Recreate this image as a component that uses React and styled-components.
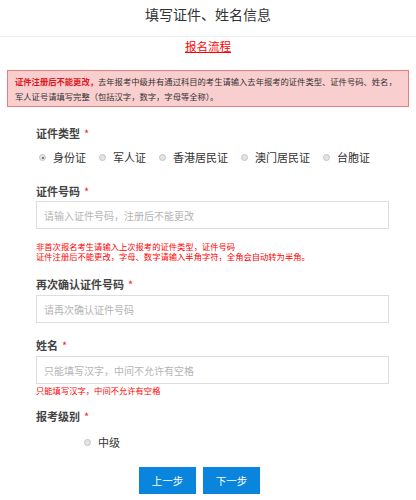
import styled, { createGlobalStyle } from "styled-components";

const GlobalStyle = createGlobalStyle`
  html, body {
    margin: 0;
    padding: 0;
    background: #fff;
  }
  body {
    font-family: "Noto Sans CJK SC", "Liberation Sans", sans-serif;
    color: #333;
  }
`;

const Page = styled.div`
  width: 416px;
`;

const Header = styled.div`
  height: 37px;
  box-sizing: border-box;
  padding-bottom: 9px;
  border-bottom: 1px solid #eee;
  text-align: center;
  font-size: 14px;
  line-height: 28px;
  color: #333;
`;

const FlowLink = styled.a`
  display: block;
  width: fit-content;
  margin: 0 auto;
  font-size: 11.5px;
  line-height: 18px;
  color: #f00;
  text-decoration: underline;
`;

const Alert = styled.div`
  margin: 15px 7px 0;
  padding: 3px 5px 2px 7px;
  border: 1px solid #e58080;
  background: #f9cece;
  font-size: 8.3px;
  line-height: 15px;
  color: #333;
  white-space: nowrap;
`;

const AlertStrong = styled.span`
  color: #e4161c;
  font-weight: bold;
`;

const Form = styled.div`
  margin: 0 27px 0 36px;
`;

const Label = styled.div`
  margin-top: ${(p) => p.$top}px;
  margin-bottom: ${(p) => p.$bottom || 2}px;
  font-size: 11px;
  font-weight: bold;
  line-height: 16px;
  color: #444;
`;

const Star = styled.span`
  margin-left: 4px;
  color: #f22;
  font-weight: normal;
`;

const RadioRow = styled.div`
  display: flex;
  gap: 13px;
  height: 17px;
  align-items: center;
  padding-left: ${(p) => p.$indent || 3}px;
`;

const RadioItem = styled.label`
  display: flex;
  align-items: center;
  gap: 7px;
  font-size: 11px;
  line-height: 17px;
  color: #333;
  white-space: nowrap;
`;

const Dot = styled.span`
  position: relative;
  width: 7px;
  height: 7px;
  box-sizing: border-box;
  border-radius: 50%;
  border: 1px solid #c4c4c4;
  background: #e4e4e4;

  &::after {
    content: "";
    display: ${(p) => (p.$checked ? "block" : "none")};
    position: absolute;
    left: 1.5px;
    top: 1.5px;
    width: 2px;
    height: 2px;
    border-radius: 50%;
    background: #555;
  }
`;

const Input = styled.input`
  display: block;
  width: 100%;
  height: 28px;
  box-sizing: border-box;
  margin: 0;
  padding: 0 7px;
  border: 1px solid #ddd;
  border-radius: 0;
  outline: none;
  font-family: inherit;
  font-size: 10px;
  color: #333;

  &::placeholder {
    color: #b5b5b5;
  }
`;

const HintBlock = styled.div`
  margin-top: ${(p) => p.$top || 0}px;
  font-size: 8.3px;
  line-height: 10px;
  color: #f00;
  white-space: nowrap;
`;

const ButtonRow = styled.div`
  display: flex;
  gap: 7px;
  margin-top: 16px;
  padding-left: 103px;
`;

const Button = styled.button`
  width: 57px;
  height: 27px;
  border: none;
  border-radius: 0;
  background: #0a85de;
  color: #fff;
  font-family: inherit;
  font-size: 10.5px;
  cursor: pointer;
`;

const idTypes = ["身份证", "军人证", "香港居民证", "澳门居民证", "台胞证"];

export default function App() {
  return (
    <Page>
      <GlobalStyle />
      <Header>填写证件、姓名信息</Header>
      <FlowLink href="#">报名流程</FlowLink>

      <Alert>
        <AlertStrong>证件注册后不能更改，</AlertStrong>
        去年报考中级并有通过科目的考生请输入去年报考的证件类型、证件号码、姓名，
        <br />
        军人证号请填写完整（包括汉字，数字，字母等全称）。
      </Alert>

      <Form>
        <Label $top={18} $bottom={8}>
          证件类型<Star>*</Star>
        </Label>
        <RadioRow>
          {idTypes.map((t, i) => (
            <RadioItem key={t}>
              <Dot $checked={i === 0} />
              {t}
            </RadioItem>
          ))}
        </RadioRow>

        <Label $top={17}>
          证件号码<Star>*</Star>
        </Label>
        <Input placeholder="请输入证件号码，注册后不能更改" />
        <HintBlock $top={12}>
          非首次报名考生请输入上次报考的证件类型，证件号码
          <br />
          证件注册后不能更改，字母、数字请输入半角字符，全角会自动转为半角。
        </HintBlock>

        <Label $top={15} $bottom={3}>
          再次确认证件号码<Star>*</Star>
        </Label>
        <Input placeholder="请再次确认证件号码" />

        <Label $top={14} $bottom={3}>
          姓名<Star>*</Star>
        </Label>
        <Input placeholder="只能填写汉字，中间不允许有空格" />
        <HintBlock $top={1}>只能填写汉字，中间不允许有空格</HintBlock>

        <Label $top={13} $bottom={10}>
          报考级别<Star>*</Star>
        </Label>
        <RadioRow $indent={48}>
          <RadioItem>
            <Dot />
            中级
          </RadioItem>
        </RadioRow>

        <ButtonRow>
          <Button>上一步</Button>
          <Button>下一步</Button>
        </ButtonRow>
      </Form>
    </Page>
  );
}
